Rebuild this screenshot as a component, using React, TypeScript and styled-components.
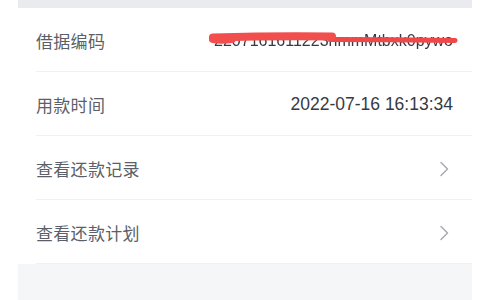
import styled, { createGlobalStyle } from "styled-components";

const GlobalStyle = createGlobalStyle`
  html, body {
    margin: 0;
    padding: 0;
    background: #ffffff;
  }
  body {
    font-family: "Liberation Sans", "Noto Sans CJK SC", Arial, sans-serif;
  }
`;

type Item = {
  label: string;
  value?: string;
  redacted?: boolean;
  link?: boolean;
};

const items: Item[] = [
  { label: "借据编码", value: "2207161611223hmmMtbxk0pywo", redacted: true },
  { label: "用款时间", value: "2022-07-16 16:13:34" },
  { label: "查看还款记录", link: true },
  { label: "查看还款计划", link: true },
];

export default function App() {
  return (
    <>
      <GlobalStyle />
      <Page>
        <Panel>
          <TopGap />
          <Card>
            {items.map((item) => (
              <Row key={item.label}>
                <Label>{item.label}</Label>
                {item.value && (
                  <Value $redacted={item.redacted}>
                    {item.value}
                    {item.redacted && <Scribble />}
                  </Value>
                )}
                {item.link && <Chevron />}
              </Row>
            ))}
          </Card>
          <Bottom />
        </Panel>
      </Page>
    </>
  );
}

// red marker line drawn over the loan number
function Scribble() {
  return (
    <ScribbleSvg viewBox="0 0 252 16" width="252" height="16">
      <path
        d="M122 8.5 C 160 8.5, 210 9, 247 9.5"
        stroke="#f04848"
        strokeWidth="5"
        strokeLinecap="round"
        fill="none"
      />
      <path
        d="M5 6.5 C 40 5.5, 90 5, 124 5.5"
        stroke="#f24e4e"
        strokeWidth="8"
        strokeLinecap="round"
        fill="none"
      />
      <path
        d="M5 8 C 10 9, 16 9, 24 8"
        stroke="#f24e4e"
        strokeWidth="8"
        strokeLinecap="round"
        fill="none"
      />
    </ScribbleSvg>
  );
}

function Chevron() {
  return (
    <ChevronSvg viewBox="0 0 10 16" width="10" height="16">
      <path
        d="M2 1.5 L8.5 8 L2 14.5"
        stroke="#a9abb2"
        strokeWidth="1.5"
        strokeLinecap="round"
        strokeLinejoin="round"
        fill="none"
      />
    </ChevronSvg>
  );
}

const Page = styled.div`
  height: 300px;
  padding: 0 8px 0 18px;
  box-sizing: border-box;
  background: #ffffff;
  overflow: hidden;
`;

const Panel = styled.div`
  height: 100%;
  display: flex;
  flex-direction: column;
  background: #f5f6f8;
`;

const TopGap = styled.div`
  height: 8px;
  background: #eaebef;
`;

const Card = styled.div`
  background: #ffffff;
  padding-left: 18px;
`;

const Row = styled.div`
  height: 64px;
  box-sizing: border-box;
  display: flex;
  align-items: center;
  justify-content: space-between;
  padding: 2px 19px 0 0;
  border-bottom: 1px solid #eff0f3;
`;

const Label = styled.span`
  font-size: 17px;
  color: #5c5f68;
  letter-spacing: 0.3px;
`;

const Value = styled.span<{ $redacted?: boolean }>`
  position: relative;
  font-size: ${(p) => (p.$redacted ? "16px" : "17.5px")};
  color: #363a44;
  filter: ${(p) => (p.$redacted ? "blur(0.6px)" : "none")};
`;

const ScribbleSvg = styled.svg`
  position: absolute;
  left: -6px;
  top: -1px;
`;

const ChevronSvg = styled.svg`
  margin-right: 4px;
`;

const Bottom = styled.div`
  flex: 1;
`;
